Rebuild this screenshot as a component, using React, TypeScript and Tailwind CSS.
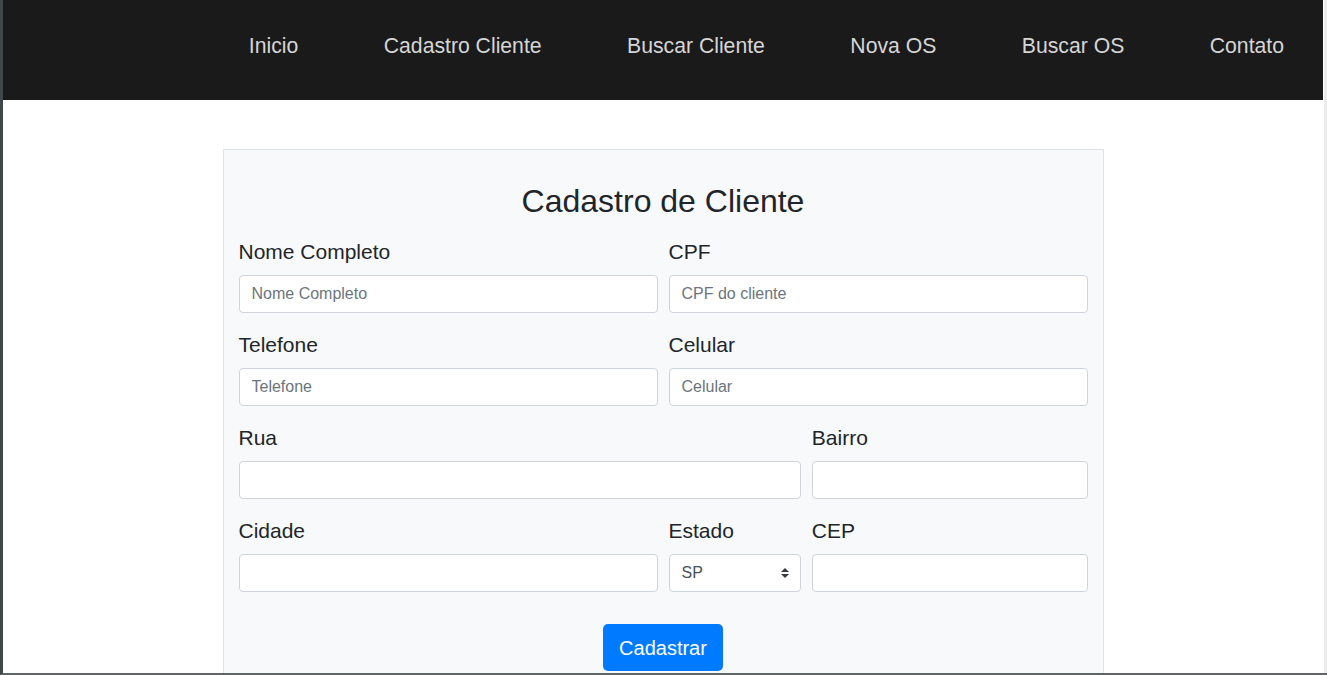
import React from 'react';

const navItems = ['Inicio', 'Cadastro Cliente', 'Buscar Cliente', 'Nova OS', 'Buscar OS', 'Contato'];

const Field: React.FC<{ label: string; placeholder?: string; span: string }> = ({ label, placeholder, span }) => (
  <div className={`${span} mb-4`}>
    <label className="block h-[31px] leading-[31px] mb-2 text-[21px] text-[#212529]">{label}</label>
    <input
      placeholder={placeholder}
      className="w-full h-[38px] px-3 bg-white border border-[#ced4da] rounded-[4px] text-base text-[#495057] placeholder:text-[#6c757d] outline-none"
    />
  </div>
);

const App: React.FC = () => {
  return (
    <div className="h-[675px] w-full flex bg-white overflow-hidden border-l-[3px] border-l-[#3f4949] border-b-2 border-b-[#5f6466]" style={{ fontFamily: '"Liberation Sans", Arial, sans-serif' }}>
      <div className="flex-1 flex flex-col min-w-0">
        <nav className="h-[100px] shrink-0 bg-[#1a1a1a] flex justify-end gap-[85.5px] pr-[39px] pt-[30px]">
          {navItems.map((item) => (
            <a key={item} className="text-[21.2px] leading-[31px] text-[#d6d6d6] whitespace-nowrap">
              {item}
            </a>
          ))}
        </nav>

        <div className="mt-[49px] mx-auto w-[881px] flex-1 bg-[#f8f9fa] border border-[#dee2e6] border-b-0 px-[15px] pt-[32px]">
          <h2 className="text-center text-[32px] leading-[38px] text-[#212529] mb-[16px]">Cadastro de Cliente</h2>

          <div className="grid grid-cols-12 gap-x-[11px]">
            <Field span="col-span-6" label="Nome Completo" placeholder="Nome Completo" />
            <Field span="col-span-6" label="CPF" placeholder="CPF do cliente" />
            <Field span="col-span-6" label="Telefone" placeholder="Telefone" />
            <Field span="col-span-6" label="Celular" placeholder="Celular" />
            <Field span="col-span-8" label="Rua" />
            <Field span="col-span-4" label="Bairro" />
            <Field span="col-span-6" label="Cidade" />
            <div className="col-span-2 mb-4">
              <label className="block h-[31px] leading-[31px] mb-2 text-[21px] text-[#212529]">Estado</label>
              <div className="relative h-[38px] bg-white border border-[#ced4da] rounded-[4px] flex items-center px-3 text-base text-[#495057]">
                <span>SP</span>
                <svg className="absolute right-[11px] top-1/2 -translate-y-1/2" width="8" height="10" viewBox="0 0 8 10">
                  <path d="M4 0 L8 4 H0 Z M4 10 L0 6 H8 Z" fill="#343a40" />
                </svg>
              </div>
            </div>
            <Field span="col-span-4" label="CEP" />
          </div>

          <div className="flex justify-center mt-[16px]">
            <button className="h-[47px] px-4 rounded-[5px] bg-[#007bff] text-white text-[20px]">Cadastrar</button>
          </div>
        </div>
      </div>
      <div className="w-[4px] shrink-0 bg-[#ececec] border-l border-l-white" />
    </div>
  );
};

export default App;
